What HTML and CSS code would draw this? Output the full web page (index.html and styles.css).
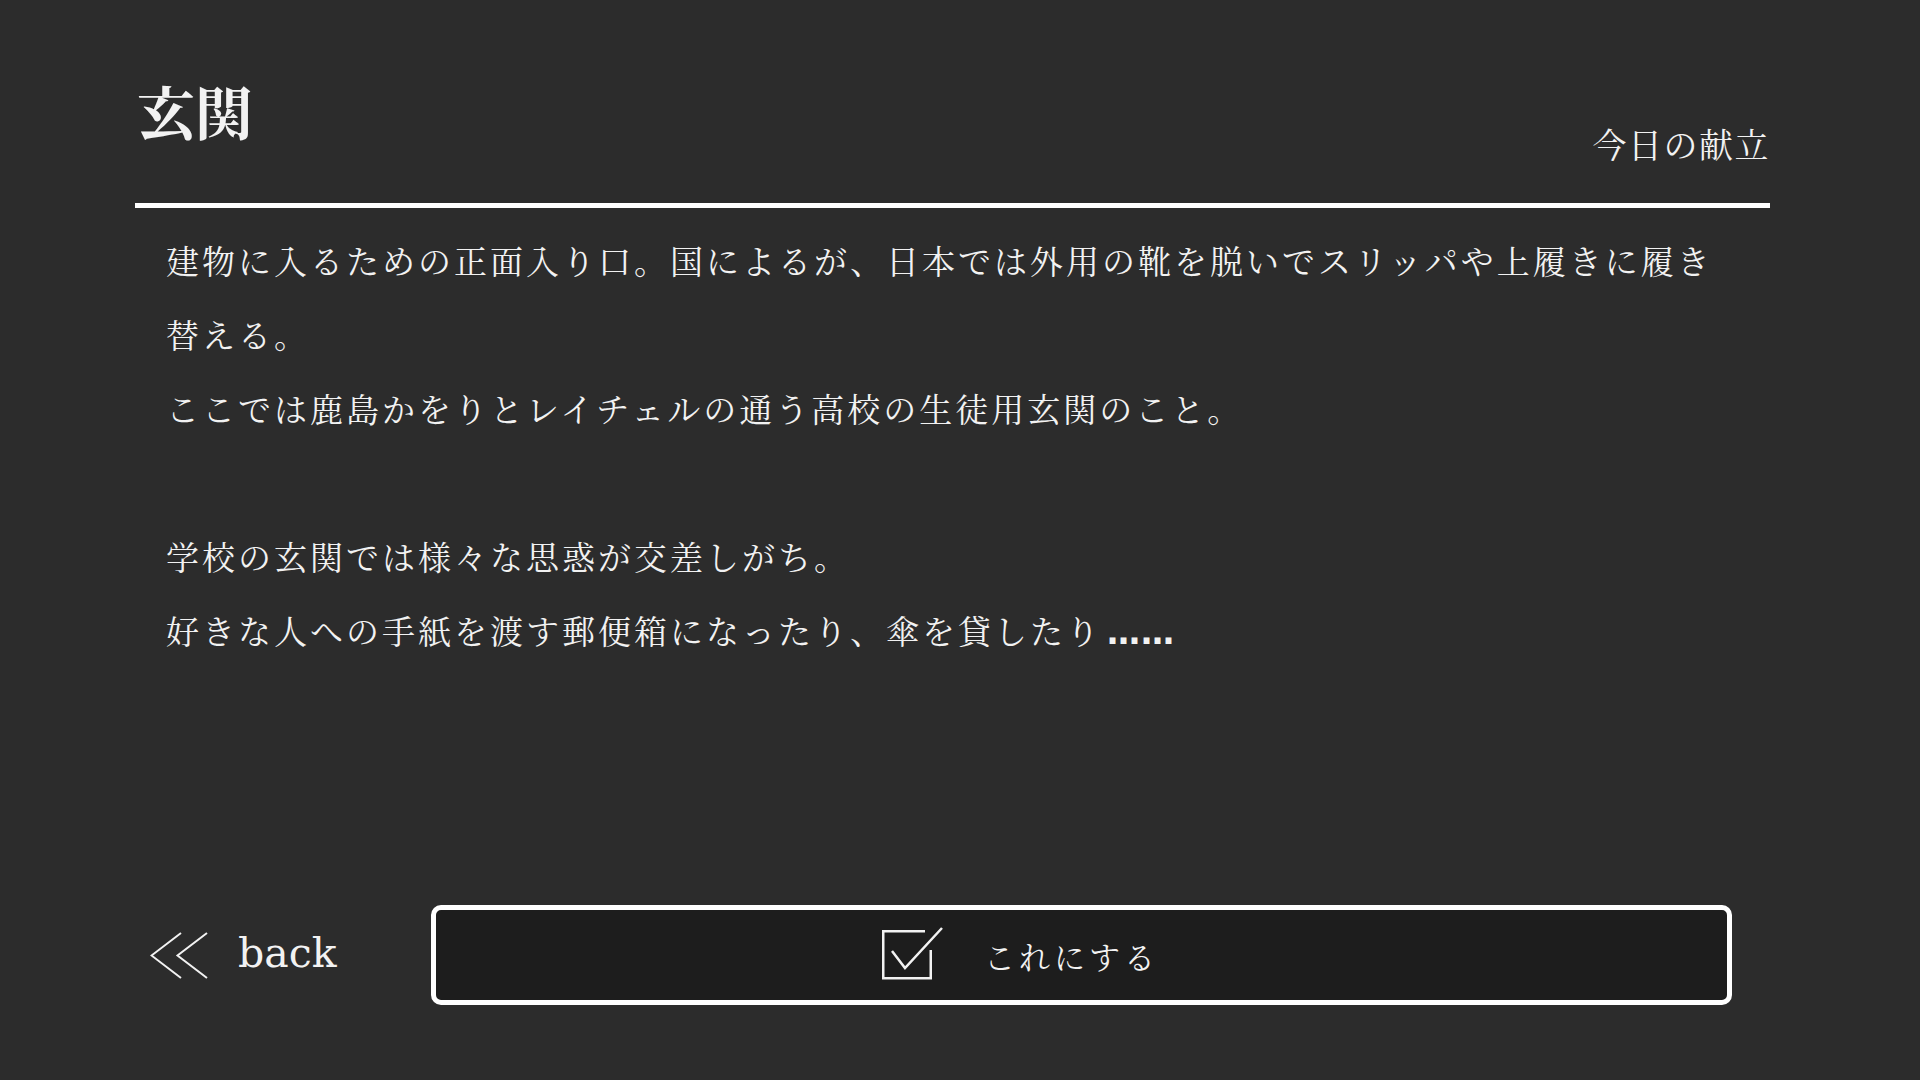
FILE: index.html
```html
<!DOCTYPE html>
<html lang="ja">
<head>
  <meta charset="UTF-8" />
  <meta name="viewport" content="width=device-width, initial-scale=1.0" />
  <title>玄関</title>
  <link rel="stylesheet" href="styles.css">
</head>
<body>
  <div class="page">
    <header class="head">
      <h1 class="title">玄関</h1>
      <span class="menu-name">今日の献立</span>
    </header>

    <main class="desc">
      <p>建物に入るための正面入り口。国によるが、日本では外用の靴を脱いでスリッパや上履きに履き替える。</p>
      <p>ここでは鹿島かをりとレイチェルの通う高校の生徒用玄関のこと。</p>
      <p class="gap">学校の玄関では様々な思惑が交差しがち。</p>
      <p>好きな人への手紙を渡す郵便箱になったり、傘を貸したり<span class="dots">……</span></p>
    </main>

    <footer class="actions">
      <a class="back" href="#">
        <svg class="back-icon" width="58" height="47" viewBox="0 0 58 47">
          <path d="M31 1 L1.5 23.5 L31 46" />
          <path d="M57 1 L27.5 23.5 L57 46" />
        </svg>
        <span>back</span>
      </a>
      <button class="choose">
        <svg class="check" width="62" height="54" viewBox="0 0 62 54">
          <path d="M43 5.25 H1.25 V52.25 H48.75 V24" />
          <path d="M10 25 L23 42 L60 2" />
        </svg>
        <span>これにする</span>
      </button>
    </footer>
  </div>
</body>
</html>
```

FILE: styles.css
```css
* {
  box-sizing: border-box;
  margin: 0;
  padding: 0;
}

body {
  font-family: "Noto Serif CJK JP", "Noto Sans CJK JP", serif;
  background-color: #2c2c2c;
  color: #f2f2f2;
}

.page {
  height: 1080px;
  display: flex;
  flex-direction: column;
  padding: 0 150px 75px 135px;
}

.head {
  display: flex;
  justify-content: space-between;
  align-items: flex-start;
  padding-top: 81px;
  border-bottom: 5px solid #fff;
}

.title {
  font-size: 58px;
  line-height: 1;
  font-weight: bold;
  padding-bottom: 64px;
  padding-left: 2px;
}

.menu-name {
  font-size: 34px;
  line-height: 1;
  letter-spacing: 1.5px;
  margin-top: 46px;
}

.desc {
  padding: 15px 31px 0;
  font-size: 33px;
  line-height: 74px;
  letter-spacing: 3px;
}

.desc .gap {
  margin-top: 74px;
}

.dots {
  font-family: "DejaVu Sans", sans-serif;
  font-weight: bold;
  letter-spacing: 1px;
  margin-left: 5px;
}

.actions {
  margin-top: auto;
  display: flex;
  align-items: center;
  padding-left: 15px;
}

.back {
  width: 281px;
  flex: none;
  display: flex;
  align-items: center;
  gap: 30px;
  color: #f2f2f2;
  text-decoration: none;
  font-family: "DejaVu Serif", serif;
  font-size: 41px;
}

.back span {
  margin-top: -4px;
}

.back-icon path {
  fill: none;
  stroke: #f2f2f2;
  stroke-width: 2;
}

.choose {
  flex: 1;
  margin-right: 38px;
  height: 100px;
  display: flex;
  align-items: center;
  padding-left: 446px;
  background-color: #1d1d1d;
  border: 5px solid #fff;
  border-radius: 10px;
  color: #f2f2f2;
  font-family: inherit;
  font-size: 31px;
  letter-spacing: 4px;
  cursor: pointer;
}

.check {
  margin-top: -4px;
}

.check path {
  fill: none;
  stroke: #f2f2f2;
  stroke-width: 2.5;
}

.choose span {
  margin-left: 40px;
}
```
